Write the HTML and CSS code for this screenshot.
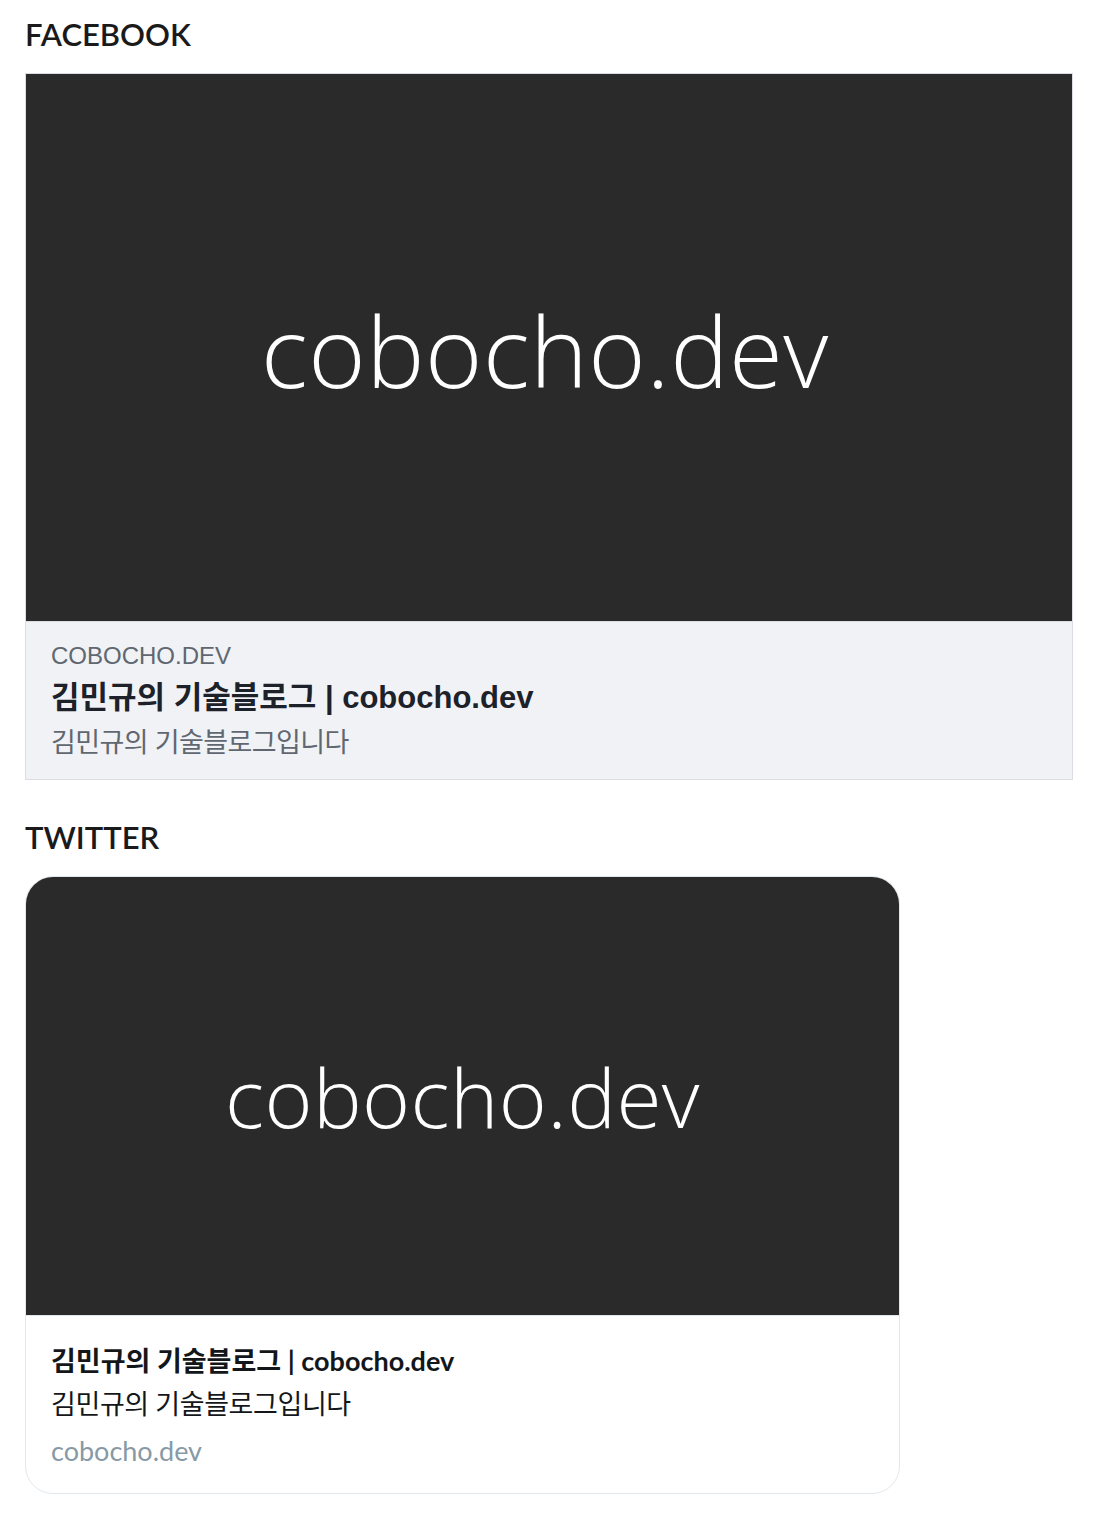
FILE: index.html
```html
<!DOCTYPE html>
<html lang="ko">
<head>
<meta charset="utf-8">
<title>OG Preview</title>
<link rel="stylesheet" href="styles.css">
</head>
<body>
<main class="page">
  <section class="preview">
    <h2 class="label">FACEBOOK</h2>
    <div class="fb-card">
      <div class="og-image fb-image"><span class="og-text fb-og-text">cobocho.dev</span></div>
      <div class="fb-body">
        <div class="fb-domain">COBOCHO.DEV</div>
        <div class="fb-title">김민규의 기술블로그 | cobocho.dev</div>
        <div class="fb-desc">김민규의 기술블로그입니다</div>
      </div>
    </div>
  </section>
  <section class="preview">
    <h2 class="label">TWITTER</h2>
    <div class="tw-card">
      <div class="og-image tw-image"><span class="og-text tw-og-text">cobocho.dev</span></div>
      <div class="tw-body">
        <div class="tw-title">김민규의 기술블로그 | cobocho.dev</div>
        <div class="tw-desc">김민규의 기술블로그입니다</div>
        <div class="tw-domain">cobocho.dev</div>
      </div>
    </div>
  </section>
</main>
</body>
</html>
```

FILE: styles.css
```css
html, body {
  margin: 0;
  padding: 0;
  background: #ffffff;
}

.page {
  padding: 14px 25px 0 25px;
  display: flex;
  flex-direction: column;
  gap: 37px;
  font-family: "Lato", "Noto Sans CJK KR", sans-serif;
}

.preview {
  display: flex;
  flex-direction: column;
}

.label {
  margin: 0 0 19px 0;
  font-family: "Lato", sans-serif;
  font-weight: 600;
  font-size: 31px;
  line-height: 40px;
  color: #1a1a1a;
  letter-spacing: 0;
}

.og-image {
  background: #2a2a2a;
  display: flex;
  align-items: center;
  justify-content: center;
  overflow: hidden;
}

.og-text {
  font-family: "Open Sans", sans-serif;
  font-weight: 300;
  color: #ffffff;
  white-space: nowrap;
}

/* Facebook */
.fb-card {
  width: 1046px;
  border: 1px solid #dadde1;
}

.fb-image {
  height: 547px;
  border-bottom: 1px solid #dadde1;
}

.fb-og-text {
  font-size: 98px;
  line-height: 1;
  letter-spacing: 0.5px;
  margin-left: -8px;
  margin-top: 4px;
}

.fb-body {
  background: #f0f2f5;
  padding: 19px 24px 14px 25px;
  display: flex;
  flex-direction: column;
  font-family: "Liberation Sans", "Noto Sans CJK KR", sans-serif;
}

.fb-domain {
  font-size: 24px;
  line-height: 30px;
  color: #606770;
}

.fb-title {
  font-size: 31px;
  line-height: 46px;
  font-weight: 700;
  color: #1d2129;
  margin-top: 4px;
}

.fb-desc {
  font-size: 27px;
  line-height: 44px;
  letter-spacing: -0.6px;
  color: #606770;
}

/* Twitter */
.tw-card {
  width: 873px;
  border: 1px solid #e1e8ed;
  border-radius: 28px;
  overflow: hidden;
}

.tw-image {
  height: 438px;
  border-bottom: 1px solid #e1e8ed;
}

.tw-og-text {
  font-size: 82px;
  line-height: 1;
  letter-spacing: 0.4px;
  margin-top: 0;
}

.tw-body {
  padding: 26px 25px 21px 25px;
  display: flex;
  flex-direction: column;
  gap: 4px;
  font-family: "Lato", "Noto Sans CJK KR", sans-serif;
}

.tw-title {
  font-size: 27px;
  line-height: 38px;
  font-weight: 700;
  color: #14171a;
}

.tw-desc {
  font-size: 27px;
  line-height: 40px;
  letter-spacing: -0.4px;
  color: #14171a;
}

.tw-domain {
  font-size: 27px;
  line-height: 42px;
  margin-top: 2px;
  color: #8899a6;
}
```
